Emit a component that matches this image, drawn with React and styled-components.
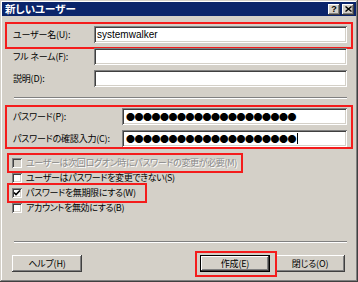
import React from "react";
import styled, { createGlobalStyle } from "styled-components";

const GlobalStyle = createGlobalStyle`
  html, body {
    margin: 0;
    padding: 0;
    background: #d4d0c8;
  }
  * {
    box-sizing: border-box;
  }
`;

const Window = styled.div`
  width: 358px;
  height: 282px;
  padding: 2px;
  background: #d4d0c8;
  box-shadow: inset -1px -1px #404040, inset 1px 1px #d4d0c8,
    inset -2px -2px #808080, inset 2px 2px #fff;
  font-family: "Noto Sans CJK JP", sans-serif;
  font-feature-settings: "palt";
  font-size: 9px;
  letter-spacing: -0.2px;
  color: #000;
  display: flex;
  flex-direction: column;
`;

const TitleBar = styled.div`
  height: 14px;
  background: #0a246a;
  display: flex;
  align-items: center;
  justify-content: space-between;
  padding: 0 2px 0 3px;
`;

const Title = styled.div`
  color: #fff;
  font-weight: bold;
  font-size: 10.5px;
  letter-spacing: 0;
  line-height: 14px;
`;

const CaptionButtons = styled.div`
  display: flex;
  gap: 2px;
`;

const CaptionButton = styled.div`
  width: 12px;
  height: 11px;
  background: #d4d0c8;
  box-shadow: inset -1px -1px #404040, inset 1px 1px #fff,
    inset -2px -2px #808080;
  display: flex;
  align-items: center;
  justify-content: center;
  font-family: "Liberation Sans", sans-serif;
  font-weight: bold;
  font-size: 9px;
  line-height: 1;
`;

const Body = styled.div`
  flex: 1;
  display: flex;
  flex-direction: column;
  padding: 10px 9px 0 9px;
`;

const Group = styled.div`
  position: relative;
  display: flex;
  flex-direction: column;
  gap: ${({ $gap }) => $gap ?? 5}px;
  margin-top: ${({ $top }) => $top ?? 0}px;
`;

const Highlight = styled.div`
  position: absolute;
  top: ${({ $t }) => $t}px;
  bottom: ${({ $b }) => $b}px;
  left: ${({ $l }) => $l}px;
  ${({ $w, $r }) => ($w ? `width: ${$w}px;` : `right: ${$r}px;`)}
  border: 2px solid #f41c1c;
  pointer-events: none;
`;

const FieldRow = styled.div`
  display: grid;
  grid-template-columns: ${({ $labelWidth }) => $labelWidth}px 1fr;
  align-items: center;
  height: 17px;
  padding-left: 2px;
`;

const Label = styled.span`
  white-space: nowrap;
  line-height: 17px;
`;

const TextBox = styled.div`
  height: 17px;
  background: #fff;
  box-shadow: inset 1px 1px #808080, inset -1px -1px #fff,
    inset 2px 2px #404040, inset -2px -2px #d4d0c8;
  padding: 0 3px;
  display: flex;
  align-items: center;
  font-family: "Liberation Sans", sans-serif;
  font-size: 10px;
  letter-spacing: 0;
  white-space: nowrap;
  overflow: hidden;
`;

const Dots = styled.span`
  font-family: "Noto Sans CJK JP", sans-serif;
  font-feature-settings: normal;
  font-size: 9px;
  letter-spacing: -0.5px;
  line-height: 1;
  margin-left: 1px;
`;

const Caret = styled.span`
  display: inline-block;
  width: 1px;
  height: 11px;
  background: #000;
  margin-left: 1px;
`;

const Separator = styled.div`
  height: 2px;
  border-top: 1px solid #808080;
  border-bottom: 1px solid #fff;
  margin: ${({ $m }) => $m};
`;

const CheckRow = styled.div`
  position: relative;
  display: flex;
  align-items: center;
  height: 15px;
  gap: 4px;
  padding-left: 1px;
  letter-spacing: -0.35px;
  color: ${({ $disabled }) => ($disabled ? "#8a8a8a" : "#000")};
  text-shadow: ${({ $disabled }) => ($disabled ? "1px 1px #fff" : "none")};
  white-space: nowrap;
`;

const Box = styled.span`
  width: 10px;
  height: 10px;
  flex: none;
  background: ${({ $disabled }) => ($disabled ? "#d4d0c8" : "#fff")};
  box-shadow: inset 1px 1px #808080, inset -1px -1px #fff,
    inset 2px 2px #404040, inset -2px -2px #d4d0c8;
  display: flex;
  align-items: center;
  justify-content: center;
`;

const ButtonRow = styled.div`
  display: flex;
  justify-content: space-between;
  padding: 0 2px 0 1px;
`;

const ButtonGroup = styled.div`
  display: flex;
  gap: 5px;
`;

const ButtonWrap = styled.div`
  position: relative;
`;

const Button = styled.div`
  width: 70px;
  height: 17px;
  display: flex;
  align-items: center;
  justify-content: center;
  background: #d4d0c8;
  border: ${({ $primary }) => ($primary ? "1px solid #000" : "none")};
  box-shadow: inset -1px -1px #404040, inset 1px 1px #fff,
    inset -2px -2px #808080, inset 2px 2px #d4d0c8;
  line-height: 1;
`;

const Check = () => (
  <svg width="8" height="8" viewBox="0 0 8 8">
    <polyline points="1,3.5 3,5.5 7,1.5" fill="none" stroke="#000" strokeWidth="1.6" />
  </svg>
);

const CloseGlyph = () => (
  <svg width="7" height="6" viewBox="0 0 7 6">
    <path d="M0.5 0.5 L6.5 5.5 M6.5 0.5 L0.5 5.5" stroke="#000" strokeWidth="1.4" />
  </svg>
);

const dots = "●".repeat(20);

export default function App() {
  return (
    <>
      <GlobalStyle />
      <Window>
        <TitleBar>
          <Title>新しいユーザー</Title>
          <CaptionButtons>
            <CaptionButton>?</CaptionButton>
            <CaptionButton>
              <CloseGlyph />
            </CaptionButton>
          </CaptionButtons>
        </TitleBar>
        <Body>
          <Group>
            <FieldRow $labelWidth={81}>
              <Label>ユーザー名(U):</Label>
              <TextBox>systemwalker</TextBox>
            </FieldRow>
            <Highlight $t={-4} $b={-6} $l={-6} $r={-6} />
          </Group>
          <Group $top={5}>
            <FieldRow $labelWidth={81}>
              <Label>フル ネーム(F):</Label>
              <TextBox />
            </FieldRow>
            <FieldRow $labelWidth={81}>
              <Label>説明(D):</Label>
              <TextBox />
            </FieldRow>
          </Group>
          <Separator $m="10px 0 0 3px" />
          <Group $top={9}>
            <FieldRow $labelWidth={109}>
              <Label>パスワード(P):</Label>
              <TextBox>
                <Dots>{dots}</Dots>
              </TextBox>
            </FieldRow>
            <FieldRow $labelWidth={109}>
              <Label>パスワードの確認入力(C):</Label>
              <TextBox>
                <Dots>{dots}</Dots>
                <Caret />
              </TextBox>
            </FieldRow>
            <Highlight $t={-3} $b={-2} $l={-6} $r={-6} />
          </Group>
          <Group $gap={0} $top={8}>
            <CheckRow $disabled>
              <Box $disabled />
              ユーザーは次回ログオン時にパスワードの変更が必要(M)
              <Highlight $t={-2} $b={-3} $l={-4} $w={236} />
            </CheckRow>
            <CheckRow>
              <Box />
              ユーザーはパスワードを変更できない(S)
            </CheckRow>
            <CheckRow>
              <Box>
                <Check />
              </Box>
              パスワードを無期限にする(W)
              <Highlight $t={-2} $b={-3} $l={-4} $w={140} />
            </CheckRow>
            <CheckRow>
              <Box />
              アカウントを無効にする(B)
            </CheckRow>
          </Group>
          <Separator $m="26px 0 12px 3px" />
          <ButtonRow>
            <Button>ヘルプ(H)</Button>
            <ButtonGroup>
              <ButtonWrap>
                <Button $primary>作成(E)</Button>
                <Highlight $t={-4} $b={-5} $l={-5} $r={-7} />
              </ButtonWrap>
              <Button>閉じる(O)</Button>
            </ButtonGroup>
          </ButtonRow>
        </Body>
      </Window>
    </>
  );
}
